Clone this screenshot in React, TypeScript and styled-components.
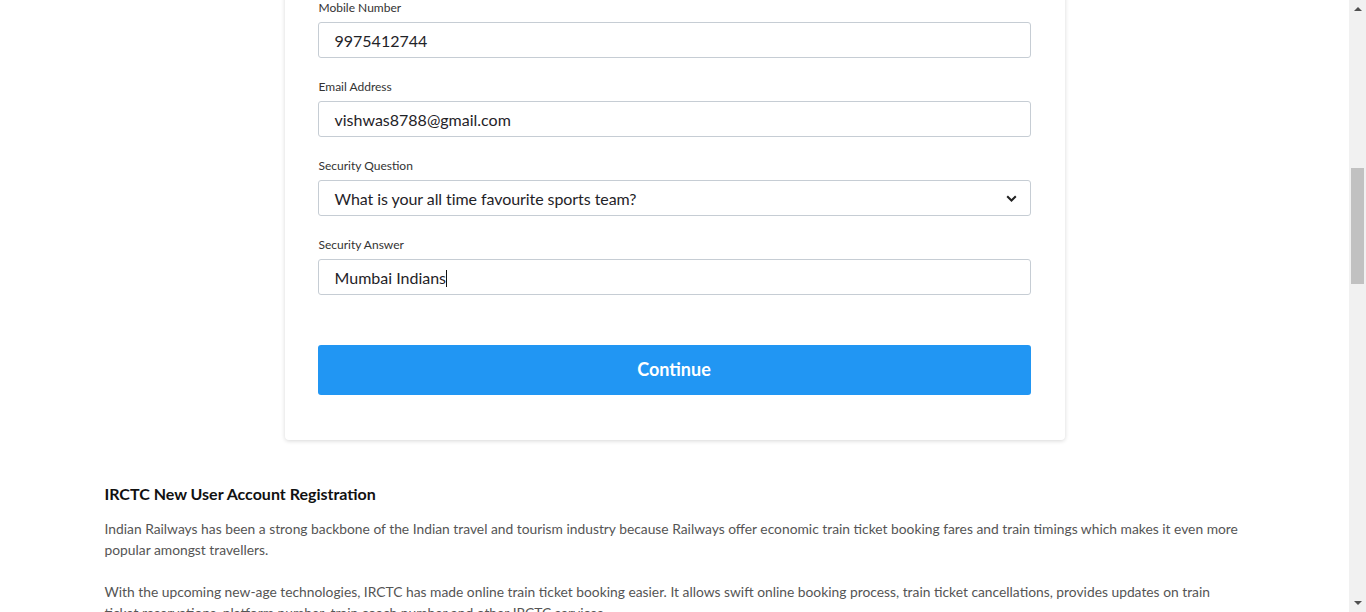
import React from "react";
import styled, { createGlobalStyle } from "styled-components";

const GlobalStyle = createGlobalStyle`
  html, body { margin: 0; padding: 0; background: #fff; overflow: hidden; }
  body { font-family: Lato, "Open Sans", sans-serif; }
  * { box-sizing: border-box; }
`;

const Shell = styled.div`
  display: flex;
  width: 1366px;
  height: 612px;
  overflow: hidden;
`;

const Page = styled.div`
  flex: 1;
  display: flex;
  flex-direction: column;
  align-items: center;
  overflow: hidden;
`;

const Card = styled.div`
  width: 780px;
  margin-top: -20px;
  padding: 20px 34px 45px 33px;
  background: #fff;
  border-radius: 4px;
  box-shadow: 0 1px 4px rgba(0, 0, 0, 0.16);
  display: flex;
  flex-direction: column;
`;

const Field = styled.div<{ $last?: boolean }>`
  display: flex;
  flex-direction: column;
  margin-bottom: ${(p) => (p.$last ? "50px" : "21px")};
`;

const Label = styled.label`
  display: block;
  font-size: 12px;
  line-height: 15px;
  color: #333;
  margin: 0 0 7px 1px;
`;

const Box = styled.div`
  height: 36px;
  border: 1px solid #c6cdd4;
  border-radius: 3px;
  padding: 1px 16px 0;
  display: flex;
  align-items: center;
  font-size: 16px;
  color: #1f2328;
  background: #fff;
`;

const Value = styled.span<{ $tight?: boolean }>`
  flex: 1;
  display: flex;
  align-items: center;
  white-space: nowrap;
  ${(p) => (p.$tight ? "letter-spacing: -0.07px;" : "")}
`;

const Caret = styled.span`
  display: inline-block;
  width: 1px;
  height: 17px;
  background: #111;
  margin-top: 1px;
`;

const Chevron = styled.svg`
  width: 11px;
  height: 7px;
  margin-right: -3px;
`;

const Button = styled.button`
  height: 50px;
  border: none;
  border-radius: 3px;
  background: #2196f3;
  color: #fff;
  font-family: Lato, sans-serif;
  font-weight: 700;
  font-size: 18px;
  padding: 0 0 2px;
`;

const Info = styled.section`
  width: 1140px;
  margin-top: 44px;
  color: #555;
`;

const Heading = styled.h2`
  margin: 0 0 14px;
  font-size: 16px;
  line-height: 20px;
  font-weight: 700;
  color: #111;
`;

const Para = styled.p`
  margin: 0 0 21px;
  font-size: 13.82px;
  line-height: 21px;
  color: #555;
`;

const Track = styled.div`
  width: 17px;
  height: 612px;
  background: #f1f1f1;
  display: flex;
  flex-direction: column;
  align-items: center;
  justify-content: space-between;
  padding: 7px 0 7px;
  position: relative;
`;

const Arrow = styled.div<{ $down?: boolean }>`
  width: 0;
  height: 0;
  border-left: 4px solid transparent;
  border-right: 4px solid transparent;
  ${(p) =>
    p.$down
      ? "border-top: 4px solid #505050;"
      : "border-bottom: 4px solid #505050;"}
`;

const Thumb = styled.div`
  position: absolute;
  left: 2px;
  top: 168px;
  width: 13px;
  height: 116px;
  background: #c1c1c1;
`;

export default function App() {
  return (
    <>
      <GlobalStyle />
      <Shell>
        <Page>
          <Card>
            <Field>
              <Label>Mobile Number</Label>
              <Box>
                <Value>9975412744</Value>
              </Box>
            </Field>
            <Field>
              <Label>Email Address</Label>
              <Box>
                <Value>vishwas8788@gmail.com</Value>
              </Box>
            </Field>
            <Field>
              <Label>Security Question</Label>
              <Box>
                <Value $tight>What is your all time favourite sports team?</Value>
                <Chevron viewBox="0 0 11 7" fill="none">
                  <path d="M1.2 1.2 L5.5 5.5 L9.8 1.2" stroke="#222" strokeWidth="2" />
                </Chevron>
              </Box>
            </Field>
            <Field $last>
              <Label>Security Answer</Label>
              <Box>
                <Value>
                  Mumbai Indians
                  <Caret />
                </Value>
              </Box>
            </Field>
            <Button>Continue</Button>
          </Card>
          <Info>
            <Heading>IRCTC New User Account Registration</Heading>
            <Para>
              Indian Railways has been a strong backbone of the Indian travel and tourism industry because Railways offer economic train ticket booking fares and train timings which makes it even more popular amongst travellers.
            </Para>
            <Para>
              With the upcoming new-age technologies, IRCTC has made online train ticket booking easier. It allows swift online booking process, train ticket cancellations, provides updates on train ticket reservations, platform number, train coach number and other IRCTC services.
            </Para>
          </Info>
        </Page>
        <Track>
          <Arrow />
          <Thumb />
          <Arrow $down />
        </Track>
      </Shell>
    </>
  );
}
